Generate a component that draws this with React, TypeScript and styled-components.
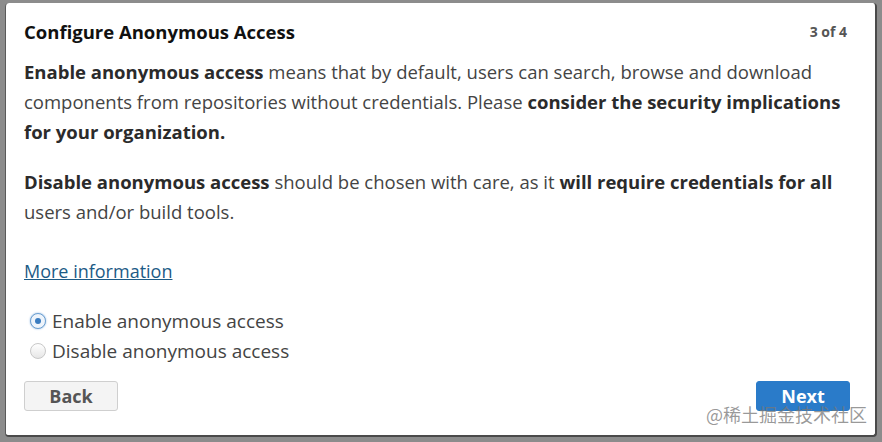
import styled, { createGlobalStyle } from "styled-components"
import { useState } from "react"

const Global = createGlobalStyle`
    html, body {
        margin: 0;
        padding: 0;
        background: #8c8c8c;
    }
    body {
        font-family: "Open Sans", "Liberation Sans", sans-serif;
    }
`

export default function App() {
    const [access, setAccess] = useState("enable")

    return (
        <>
            <Global />
            <Backdrop>
                <Dialog>
                    <Header>
                        <Title>Configure Anonymous Access</Title>
                        <Step>3 of 4</Step>
                    </Header>
                    <Text>
                        <b>Enable anonymous access</b> means that by default, users can search, browse and download<br />
                        components from repositories without credentials. Please <b>consider the security implications</b><br />
                        <b>for your organization.</b>
                    </Text>
                    <Text>
                        <b>Disable anonymous access</b> should be chosen with care, as it <b>will require credentials for all</b><br />
                        users and/or build tools.
                    </Text>
                    <MoreLink href="#">More information</MoreLink>
                    <Options>
                        <Option>
                            <Radio checked={access === "enable"} onClick={() => setAccess("enable")} />
                            Enable anonymous access
                        </Option>
                        <Option>
                            <Radio checked={access === "disable"} onClick={() => setAccess("disable")} />
                            Disable anonymous access
                        </Option>
                    </Options>
                    <Footer>
                        <BackButton type="button">Back</BackButton>
                        <NextButton type="button">Next</NextButton>
                    </Footer>
                    <Watermark>@稀土掘金技术社区</Watermark>
                </Dialog>
            </Backdrop>
        </>
    )
}

const Backdrop = styled.div`
    width: 882px;
    height: 442px;
    padding: 3px 5px 5px 5px;
    box-sizing: border-box;
    background: #8c8c8c;
`

const Dialog = styled.div`
    position: relative;
    height: 100%;
    box-sizing: border-box;
    background: #fff;
    border-radius: 4px;
    border-right: 2px solid #4a4a4a;
    border-bottom: 2px solid #4a4a4a;
    border-left: 1px solid #5a5a5a;
    padding: 12px 25px 0 18px;
    color: #333;
`

const Header = styled.div`
    display: flex;
    justify-content: space-between;
    align-items: center;
    height: 32px;
`

const Title = styled.h1`
    margin: 0;
    font-size: 18.5px;
    font-weight: 700;
    color: #111;
`

const Step = styled.span`
    margin-right: 3px;
    font-size: 14px;
    font-weight: 700;
    color: #555;
`

const Text = styled.p`
    margin: 10px 0 20px;
    font-size: 18.5px;
    line-height: 30px;
    color: #444;
    white-space: nowrap;

    b {
        font-weight: 700;
        color: #2b2b2b;
    }
`

const MoreLink = styled.a`
    display: inline-block;
    margin-top: 12px;
    font-size: 18px;
    color: #1d5b86;
    text-decoration: underline;
`

const Options = styled.div`
    display: flex;
    flex-direction: column;
    margin-top: 23px;
    padding-left: 6px;
`

const Option = styled.label`
    display: flex;
    align-items: center;
    gap: 6px;
    height: 30px;
    font-size: 19px;
    color: #444;
    cursor: pointer;
`

const Radio = styled.span<{ checked: boolean }>`
    position: relative;
    width: 16px;
    height: 16px;
    box-sizing: border-box;
    border-radius: 50%;
    border: 1px solid ${p => (p.checked ? "#6c9fd0" : "#c8c8c8")};
    background: ${p => (p.checked ? "#eef4fb" : "linear-gradient(#fff, #e6e6e6)")};
    box-shadow: ${p => (p.checked ? "0 0 2px #8ab4e0" : "none")};

    &::after {
        content: "";
        display: ${p => (p.checked ? "block" : "none")};
        position: absolute;
        left: 4px;
        top: 4px;
        width: 6px;
        height: 6px;
        border-radius: 50%;
        background: #3a7cc0;
    }
`

const Footer = styled.div`
    display: flex;
    justify-content: space-between;
    margin-top: 15px;
`

const BaseButton = styled.button`
    width: 94px;
    height: 30px;
    padding: 0;
    border-radius: 3px;
    font-family: "Open Sans", "Liberation Sans", sans-serif;
    font-size: 18px;
    font-weight: 700;
    cursor: pointer;
`

const BackButton = styled(BaseButton)`
    background: #f4f4f4;
    border: 1px solid #cfcfcf;
    color: #555;
`

const NextButton = styled(BaseButton)`
    background: #2a7bc9;
    border: 1px solid #2a7bc9;
    color: #fff;
`

const Watermark = styled.div`
    position: absolute;
    right: 8px;
    bottom: 8px;
    font-family: "Noto Sans CJK SC", sans-serif;
    font-size: 18px;
    color: rgba(120, 120, 120, 0.75);
    pointer-events: none;
`
